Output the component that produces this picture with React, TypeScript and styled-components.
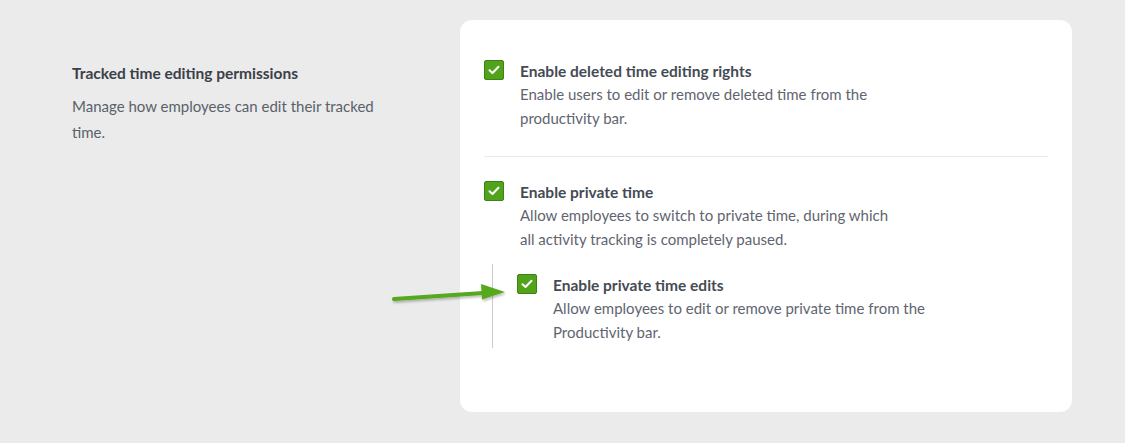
import React from 'react';
import styled, {createGlobalStyle} from 'styled-components';

const GlobalStyle = createGlobalStyle`
  body {
    margin: 0;
    background: #eaebea;
    font-family: "Lato", "Liberation Sans", sans-serif;
  }
`;

const Page = styled.div`
  display: flex;
  align-items: flex-start;
  padding: 20px 53px 32px 72px;
`;

const Intro = styled.div`
  width: 310px;
  flex: 0 0 auto;
  margin-right: 78px;
  padding-top: 43px;
`;

const IntroTitle = styled.div`
  font-size: 15.5px;
  font-weight: 700;
  line-height: 20px;
  color: #3b4049;
`;

const IntroText = styled.div`
  margin-top: 10px;
  font-size: 15px;
  line-height: 26px;
  color: #5b616b;
`;

const Card = styled.div`
  width: 612px;
  box-sizing: border-box;
  background: #fff;
  border-radius: 12px;
  padding: 40px 24px 64px;
`;

const Option = styled.div`
  display: flex;
  gap: 16px;
  align-items: flex-start;
`;

const Box = styled.div`
  width: 20px;
  height: 20px;
  box-sizing: border-box;
  flex: 0 0 auto;
  border-radius: 2px;
  background: #52a31c;
  border: 1px solid #3f8214;
  display: flex;
  align-items: center;
  justify-content: center;
`;

const Body = styled.div`
  width: 376px;
`;

const Title = styled.div`
  font-size: 15.5px;
  font-weight: 700;
  line-height: 22px;
  color: #454b54;
`;

const Desc = styled.div`
  font-size: 15px;
  line-height: 24px;
  color: #5f6570;
`;

const Divider = styled.div`
  height: 1px;
  background: #e8e9ea;
  margin: 26px 0 24px;
`;

const Nested = styled.div`
  position: relative;
  margin: 13px 0 0 8px;
  padding: 10px 0 4px 24px;
  border-left: 1px solid #c9cbcd;
`;

const Arrow = styled.svg`
  position: absolute;
  left: -101px;
  top: 16px;
  overflow: visible;
`;

const Check = () => (
  <Box>
    <svg width="12" height="10" viewBox="0 0 12 10">
      <path d="M1.5 5.2 L4.5 8 L10.5 1.8" fill="none" stroke="#fff" strokeWidth="2" strokeLinecap="round" strokeLinejoin="round"/>
    </svg>
  </Box>
);

type ItemProps = {title: string; desc: string};

const Item = ({title, desc}: ItemProps) => (
  <Option>
    <Check/>
    <Body>
      <Title>{title}</Title>
      <Desc>{desc}</Desc>
    </Body>
  </Option>
);

const App = () => (
  <>
    <GlobalStyle/>
    <Page>
      <Intro>
        <IntroTitle>Tracked time editing permissions</IntroTitle>
        <IntroText>Manage how employees can edit their tracked time.</IntroText>
      </Intro>
      <Card>
        <Item
          title="Enable deleted time editing rights"
          desc="Enable users to edit or remove deleted time from the productivity bar."
        />
        <Divider/>
        <Item
          title="Enable private time"
          desc="Allow employees to switch to private time, during which all activity tracking is completely paused."
        />
        <Nested>
          <Arrow width="114" height="22" viewBox="0 0 114 22">
            <defs>
              <filter id="sh" x="-10%" y="-50%" width="120%" height="200%">
                <feDropShadow dx="1" dy="2" stdDeviation="1" floodColor="#000" floodOpacity="0.25"/>
              </filter>
            </defs>
            <g filter="url(#sh)">
              <path d="M2 19 L91 13" stroke="#56a81f" strokeWidth="4" strokeLinecap="round"/>
              <path d="M89 4 L113 12 L90 19.5 Z" fill="#56a81f"/>
            </g>
          </Arrow>
          <Item
            title="Enable private time edits"
            desc="Allow employees to edit or remove private time from the Productivity bar."
          />
        </Nested>
      </Card>
    </Page>
  </>
);

export default App;
